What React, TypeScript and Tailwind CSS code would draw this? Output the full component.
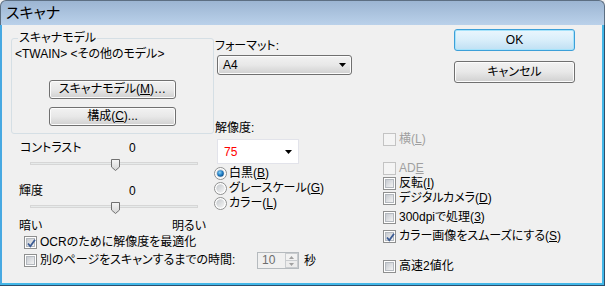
import React from 'react';

// Win7-style checkbox
const Check = ({ checked = false, disabled = false }: { checked?: boolean; disabled?: boolean }) => (
  <span
    className={`relative flex h-[13px] w-[13px] shrink-0 items-center justify-center border ${
      disabled ? 'border-[#c3c3c3] bg-[#f4f4f4]' : 'border-[#8e8f8f] bg-white'
    }`}
  >
    {!disabled && (
      <span className="h-[9px] w-[9px] border border-[#b4b9bf] bg-gradient-to-br from-[#c7cbd1] to-[#f3f3f3]" />
    )}
    {checked && (
      <svg className="absolute left-[1px] top-[1px]" width="11" height="11" viewBox="0 0 11 11">
        <path d="M2 5.5 L4.3 8.3 L9 1.8" fill="none" stroke="#3b5b94" strokeWidth="1.8" />
      </svg>
    )}
  </span>
);

const Radio = ({ checked = false }: { checked?: boolean }) => (
  <svg width="13" height="13" viewBox="0 0 13 13" className="shrink-0">
    <defs>
      <linearGradient id="rg" x1="0" y1="0" x2="1" y2="1">
        <stop offset="0" stopColor="#c4c8cc" />
        <stop offset="1" stopColor="#f6f6f6" />
      </linearGradient>
      <radialGradient id="rdot" cx="0.4" cy="0.35" r="0.7">
        <stop offset="0" stopColor="#8ad4f7" />
        <stop offset="0.6" stopColor="#1d78c1" />
        <stop offset="1" stopColor="#0f4f86" />
      </radialGradient>
    </defs>
    <circle cx="6.5" cy="6.5" r="6" fill="#fff" stroke="#8e8f8f" />
    <circle cx="6.5" cy="6.5" r="4.2" fill="url(#rg)" />
    {checked && <circle cx="6.5" cy="6.5" r="3.3" fill="url(#rdot)" />}
  </svg>
);

const Btn = ({ children, primary = false }: { children: React.ReactNode; primary?: boolean }) => (
  <div
    className={`flex h-full items-center justify-center rounded-[3px] border ${
      primary
        ? 'border-[#3c9fd8] bg-gradient-to-b from-[#eaf6fd] via-[#d9eefa] to-[#bfe0f3] shadow-[inset_0_0_0_1px_#a6e3fb]'
        : 'border-[#707070] bg-gradient-to-b from-[#f2f2f2] via-[#e8e8e8] to-[#d0d0d0] shadow-[inset_0_0_0_1px_#fcfcfc]'
    }`}
  >
    {children}
  </div>
);

const Slider = () => (
  <div className="relative ml-[19px] mt-[2px] h-[14px] w-[168px]">
    <div className="absolute left-0 right-0 top-[5px] h-[3px] border border-[#d6d6d6] bg-[#e7eaea]" />
    <svg className="absolute left-[81px] top-[2px]" width="9" height="12" viewBox="0 0 9 12">
      <defs>
        <linearGradient id="th" x1="0" y1="0" x2="0" y2="1">
          <stop offset="0" stopColor="#f6f6f6" />
          <stop offset="1" stopColor="#d4d4d4" />
        </linearGradient>
      </defs>
      <path d="M0.5 0.5 H8.5 V8 L4.5 11.5 L0.5 8 Z" fill="url(#th)" stroke="#707070" />
    </svg>
  </div>
);

const Row = ({ children, className = '' }: { children: React.ReactNode; className?: string }) => (
  <div className={`flex h-[13px] items-center gap-[3px] whitespace-nowrap leading-[13px] ${className}`}>{children}</div>
);

const RadioRow = ({ checked = false, children }: { checked?: boolean; children: React.ReactNode }) => (
  <div className="flex h-[15px] items-center gap-[2px]">
    <Radio checked={checked} />
    <span className="leading-[15px]">{children}</span>
  </div>
);

const Arrow = () => (
  <svg width="7" height="4" viewBox="0 0 7 4">
    <path d="M0 0 H7 L3.5 4 Z" fill="#000" />
  </svg>
);

export default function App() {
  return (
    <div
      className="flex h-[286px] w-[605px] flex-col overflow-hidden bg-[#f0f0f0] text-[12px] leading-[14px] text-black [font-feature-settings:'palt']"
      style={{ fontFamily: '"Liberation Sans", "Noto Sans CJK JP", sans-serif' }}
    >
      {/* title bar */}
      <div className="flex h-[25px] shrink-0 items-center rounded-t-[6px] border-x border-t border-[#5d6f82] bg-gradient-to-b from-[#9cb5d2] to-[#bad1ea] pl-[5px] text-[15px]">
        スキャナ
      </div>

      {/* body */}
      <div className="flex flex-1 border-b border-r border-[#2d4f6c]">
        <div className="flex flex-1 border-l-2 border-r-2 border-b-2 border-l-[#47a9e2] border-r-[#43b7e8] border-b-[#43b7e8] pl-[9px]">
          {/* left column */}
          <div className="flex w-[203px] shrink-0 flex-col">
            <div className="relative mt-[13px] flex h-[96px] w-[203px] flex-col rounded-[3px] border border-[#d5dfe5] pl-[3px] pt-[8px]">
              <span className="absolute left-[6px] top-[-8px] bg-[#f0f0f0] px-[1px]">スキャナモデル</span>
              <div className="whitespace-nowrap">&lt;TWAIN&gt; &lt;その他のモデル&gt;</div>
              <div className="mt-[19px] flex flex-col items-center gap-[8px] pr-[3px]">
                <div className="h-[19px] w-[127px]">
                  <Btn>
                    <span className="leading-[17px]">
                      スキャナモデル(<u>M</u>)…
                    </span>
                  </Btn>
                </div>
                <div className="h-[19px] w-[127px]">
                  <Btn>
                    <span className="leading-[17px]">
                      構成(<u>C</u>)...
                    </span>
                  </Btn>
                </div>
              </div>
            </div>

            <div className="mt-[7px] flex h-[14px] pl-[9px]">
              <span className="w-[109px]">コントラスト</span>
              <span>0</span>
            </div>
            <Slider />
            <div className="mt-[13px] flex h-[14px] pl-[8px]">
              <span className="w-[110px]">輝度</span>
              <span>0</span>
            </div>
            <Slider />
            <div className="mt-[5px] flex h-[14px] w-[195px] justify-between pl-[8px]">
              <span>暗い</span>
              <span>明るい</span>
            </div>
            <Row className="mt-[3px] pl-[13px]">
              <Check checked />
              <span>OCRのために解像度を最適化</span>
            </Row>
            <Row className="mt-[5px] pl-[13px]">
              <Check />
              <span>別のページをスキャンするまでの時間:</span>
            </Row>
          </div>

          {/* middle column */}
          <div className="flex w-[169px] shrink-0 flex-col">
            <div className="mt-[14px] h-[14px] pl-[1px]">フォーマット:</div>
            <div className="ml-[3px] mt-[2px] h-[20px] w-[135px]">
              <Btn>
                <div className="flex w-full items-center justify-between pl-[5px] pr-[5px]">
                  <span>A4</span>
                  <Arrow />
                </div>
              </Btn>
            </div>
            <div className="mt-[46px] h-[14px] pl-[1px]">解像度:</div>
            <div className="ml-[3px] mt-[4px] flex h-[25px] w-[82px] items-center justify-between border border-[#e2e3ea] bg-white pl-[6px] pr-[6px]">
              <span className="text-[#ff0000]">75</span>
              <Arrow />
            </div>
            <div className="mt-[2px] flex flex-col">
              <RadioRow checked>
                白黒(<u>B</u>)
              </RadioRow>
              <RadioRow>
                グレースケール(<u>G</u>)
              </RadioRow>
              <RadioRow>
                カラー(<u>L</u>)
              </RadioRow>
            </div>
            <div className="ml-[43px] mt-[41px] flex items-center gap-[5px]">
              <div className="flex h-[17px] w-[42px] border border-[#b5babe]">
                <span className="flex-1 pl-[4px] leading-[15px] text-[#6d6d6d]">10</span>
                <div className="flex w-[13px] flex-col">
                  <div className="flex flex-1 items-center justify-center border border-[#c9cccf] bg-[#f2f2f2]">
                    <svg width="5" height="3" viewBox="0 0 5 3">
                      <path d="M0 3 H5 L2.5 0 Z" fill="#a0a0a0" />
                    </svg>
                  </div>
                  <div className="flex flex-1 items-center justify-center border border-t-0 border-[#c9cccf] bg-[#ececec]">
                    <svg width="5" height="3" viewBox="0 0 5 3">
                      <path d="M0 0 H5 L2.5 3 Z" fill="#a0a0a0" />
                    </svg>
                  </div>
                </div>
              </div>
              <span>秒</span>
            </div>
          </div>

          {/* right column */}
          <div className="flex flex-1 flex-col">
            <div className="ml-[71px] mt-[4px] h-[22px] w-[121px]">
              <Btn primary>OK</Btn>
            </div>
            <div className="ml-[71px] mt-[10px] h-[22px] w-[121px]">
              <Btn>キャンセル</Btn>
            </div>
            <Row className="mt-[50px] text-[#a0a0a0]">
              <Check disabled />
              <span>
                横(<u>L</u>)
              </span>
            </Row>
            <Row className="mt-[16px] text-[#a0a0a0]">
              <Check disabled />
              <span>
                AD<u>E</u>
              </span>
            </Row>
            <Row className="mt-[2px]">
              <Check />
              <span>
                反転(<u>I</u>)
              </span>
            </Row>
            <Row className="mt-[2px]">
              <Check />
              <span>
                デジタルカメラ(<u>D</u>)
              </span>
            </Row>
            <Row className="mt-[6px]">
              <Check />
              <span>
                300dpiで処理(<u>3</u>)
              </span>
            </Row>
            <Row className="mt-[6px]">
              <Check checked />
              <span>
                カラー画像をスムーズにする(<u>S</u>)
              </span>
            </Row>
            <Row className="mt-[17px]">
              <Check />
              <span>高速2値化</span>
            </Row>
          </div>
        </div>
      </div>
    </div>
  );
}
